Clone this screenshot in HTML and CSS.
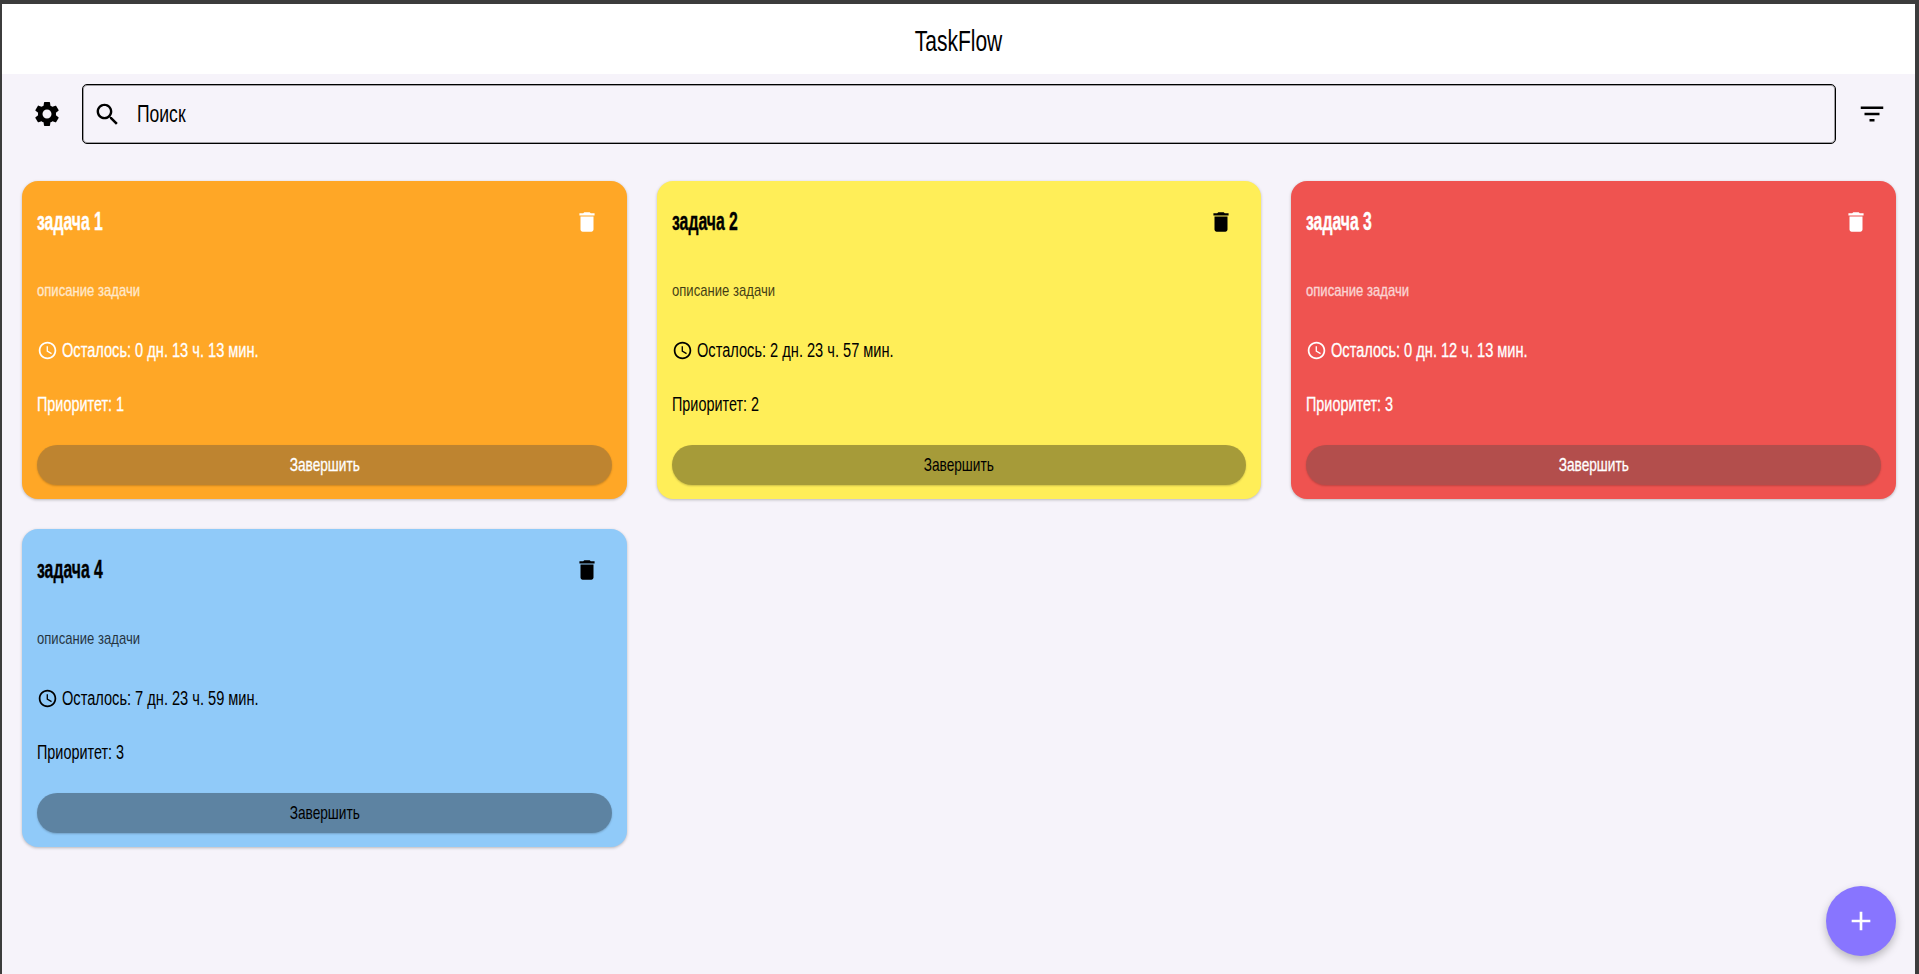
FILE: index.html
```html
<!DOCTYPE html>
<html lang="ru">
<head>
    <meta charset="UTF-8">
    <meta name="viewport" content="width=device-width, initial-scale=1.0">
    <title>TaskFlow</title>
    <link rel="stylesheet" href="styles.css">
</head>
<body>
    <div class="window">
        <header class="app-bar"><span>TaskFlow</span></header>

        <div class="toolbar">
            <button class="icon-btn settings">
                <svg width="30" height="30" viewBox="0 0 24 24"><path d="M19.14 12.94c.04-.3.06-.61.06-.94 0-.32-.02-.64-.07-.94l2.03-1.58c.18-.14.23-.41.12-.61l-1.92-3.32c-.12-.22-.37-.29-.59-.22l-2.39.96c-.5-.38-1.03-.7-1.62-.94l-.36-2.54c-.04-.24-.24-.41-.48-.41h-3.84c-.24 0-.43.17-.47.41l-.36 2.54c-.59.24-1.13.57-1.62.94l-2.39-.96c-.22-.08-.47 0-.59.22L2.74 8.87c-.12.21-.08.47.12.61l2.03 1.58c-.05.3-.09.63-.09.94s.02.64.07.94l-2.03 1.58c-.18.14-.23.41-.12.61l1.92 3.32c.12.22.37.29.59.22l2.39-.96c.5.38 1.03.7 1.62.94l.36 2.54c.05.24.24.41.48.41h3.84c.24 0 .44-.17.47-.41l.36-2.54c.59-.24 1.13-.56 1.62-.94l2.39.96c.22.08.47 0 .59-.22l1.92-3.32c.12-.22.07-.47-.12-.61l-2.01-1.58zM12 15.6c-1.98 0-3.6-1.62-3.6-3.6s1.62-3.6 3.6-3.6 3.6 1.62 3.6 3.6-1.62 3.6-3.6 3.6z"/></svg>
            </button>
            <div class="search">
                <svg width="29" height="29" viewBox="0 0 24 24"><path d="M15.5 14h-.79l-.28-.27C15.41 12.59 16 11.11 16 9.5 16 5.91 13.09 3 9.5 3S3 5.91 3 9.5 5.91 16 9.5 16c1.61 0 3.09-.59 4.23-1.57l.27.28v.79l5 4.99L20.49 19l-4.99-5zm-6 0C7.01 14 5 11.99 5 9.5S7.01 5 9.5 5 14 7.01 14 9.5 11.99 14 9.5 14z"/></svg>
                <span class="search-text">Поиск</span>
            </div>
            <button class="icon-btn filter">
                <svg width="30" height="30" viewBox="0 0 24 24"><path d="M3 6h18v2H3zM6 11h12v2H6zM10 16h4v2h-4z"/></svg>
            </button>
        </div>

        <div class="cards">
            <div class="card orange light">
                <div class="card-head">
                    <h2>задача 1</h2>
                    <svg class="trash" width="26" height="26" viewBox="0 0 24 24"><path d="M6 19c0 1.1.9 2 2 2h8c1.1 0 2-.9 2-2V7H6v12zM19 4h-3.5l-1-1h-5l-1 1H5v2h14V4z"/></svg>
                </div>
                <p class="desc"><span>описание задачи</span></p>
                <p class="left"><svg width="21" height="21" viewBox="0 0 24 24"><path d="M11.99 2C6.47 2 2 6.48 2 12s4.47 10 9.99 10C17.52 22 22 17.52 22 12S17.52 2 11.99 2zM12 20c-4.42 0-8-3.58-8-8s3.58-8 8-8 8 3.58 8 8-3.58 8-8 8zm.5-13H11v6l5.25 3.15.75-1.23-4.5-2.67V7z"/></svg><span>Осталось: 0 дн. 13 ч. 13 мин.</span></p>
                <p class="prio"><span>Приоритет: 1</span></p>
                <button class="done"><span>Завершить</span></button>
            </div>
            <div class="card yellow">
                <div class="card-head">
                    <h2>задача 2</h2>
                    <svg class="trash" width="26" height="26" viewBox="0 0 24 24"><path d="M6 19c0 1.1.9 2 2 2h8c1.1 0 2-.9 2-2V7H6v12zM19 4h-3.5l-1-1h-5l-1 1H5v2h14V4z"/></svg>
                </div>
                <p class="desc"><span>описание задачи</span></p>
                <p class="left"><svg width="21" height="21" viewBox="0 0 24 24"><path d="M11.99 2C6.47 2 2 6.48 2 12s4.47 10 9.99 10C17.52 22 22 17.52 22 12S17.52 2 11.99 2zM12 20c-4.42 0-8-3.58-8-8s3.58-8 8-8 8 3.58 8 8-3.58 8-8 8zm.5-13H11v6l5.25 3.15.75-1.23-4.5-2.67V7z"/></svg><span>Осталось: 2 дн. 23 ч. 57 мин.</span></p>
                <p class="prio"><span>Приоритет: 2</span></p>
                <button class="done"><span>Завершить</span></button>
            </div>
            <div class="card red light">
                <div class="card-head">
                    <h2>задача 3</h2>
                    <svg class="trash" width="26" height="26" viewBox="0 0 24 24"><path d="M6 19c0 1.1.9 2 2 2h8c1.1 0 2-.9 2-2V7H6v12zM19 4h-3.5l-1-1h-5l-1 1H5v2h14V4z"/></svg>
                </div>
                <p class="desc"><span>описание задачи</span></p>
                <p class="left"><svg width="21" height="21" viewBox="0 0 24 24"><path d="M11.99 2C6.47 2 2 6.48 2 12s4.47 10 9.99 10C17.52 22 22 17.52 22 12S17.52 2 11.99 2zM12 20c-4.42 0-8-3.58-8-8s3.58-8 8-8 8 3.58 8 8-3.58 8-8 8zm.5-13H11v6l5.25 3.15.75-1.23-4.5-2.67V7z"/></svg><span>Осталось: 0 дн. 12 ч. 13 мин.</span></p>
                <p class="prio"><span>Приоритет: 3</span></p>
                <button class="done"><span>Завершить</span></button>
            </div>
            <div class="card blue">
                <div class="card-head">
                    <h2>задача 4</h2>
                    <svg class="trash" width="26" height="26" viewBox="0 0 24 24"><path d="M6 19c0 1.1.9 2 2 2h8c1.1 0 2-.9 2-2V7H6v12zM19 4h-3.5l-1-1h-5l-1 1H5v2h14V4z"/></svg>
                </div>
                <p class="desc"><span>описание задачи</span></p>
                <p class="left"><svg width="21" height="21" viewBox="0 0 24 24"><path d="M11.99 2C6.47 2 2 6.48 2 12s4.47 10 9.99 10C17.52 22 22 17.52 22 12S17.52 2 11.99 2zM12 20c-4.42 0-8-3.58-8-8s3.58-8 8-8 8 3.58 8 8-3.58 8-8 8zm.5-13H11v6l5.25 3.15.75-1.23-4.5-2.67V7z"/></svg><span>Осталось: 7 дн. 23 ч. 59 мин.</span></p>
                <p class="prio"><span>Приоритет: 3</span></p>
                <button class="done"><span>Завершить</span></button>
            </div>
        </div>

        <button class="fab">
            <svg width="32" height="32" viewBox="0 0 24 24"><path d="M19 13h-6v6h-2v-6H5v-2h6V5h2v6h6v2z"/></svg>
        </button>
    </div>
</body>
</html>
```

FILE: styles.css
```css
* {
    box-sizing: border-box;
}
body {
    margin: 0;
    background-color: #3c3c3c;
    font-family: "Liberation Sans", Arial, sans-serif;
}
/* the original font is a condensed one, so the text is squeezed with scaleX */
.app-bar span,
.search-text,
.card h2,
.card p span,
.done span {
    display: inline-block;
    transform-origin: left center;
}
.window {
    position: relative;
    height: 970px;
    margin: 4px 4px 0 2px;
    background-color: #f6f3fa;
    overflow: hidden;
}
.app-bar {
    height: 70px;
    padding-top: 4px;
    background-color: #fff;
    display: flex;
    align-items: center;
    justify-content: center;
    font-size: 30px;
    color: #000;
}
.app-bar span {
    transform: scaleX(0.7);
    transform-origin: center;
}
.toolbar {
    display: flex;
    align-items: center;
    height: 60px;
    margin-top: 10px;
    padding: 0 7px 0 20px;
}
.icon-btn {
    height: 48px;
    border: none;
    background: none;
    padding: 0;
    display: flex;
    align-items: center;
    justify-content: center;
}
.settings {
    width: 60px;
    padding-right: 10px;
}
.filter {
    width: 72px;
}
.search {
    flex: 1;
    height: 60px;
    border: 1px solid #000;
    border-radius: 5px;
    box-shadow: inset 0 0 0 1px rgba(0, 0, 0, 0.35);
    display: flex;
    align-items: center;
    padding-left: 10px;
    gap: 15px;
}
.search-text {
    font-size: 24px;
    color: #000;
    transform: scaleX(0.73);
}
.cards {
    display: grid;
    grid-template-columns: repeat(3, 1fr);
    gap: 30px;
    padding: 37px 19px 0 20px;
}
.card {
    height: 318px;
    border-radius: 16px;
    padding: 15px 15px 14px;
    display: flex;
    flex-direction: column;
    color: #000;
    box-shadow: 0 1px 3px rgba(0, 0, 0, 0.25);
}
.orange {
    background-color: #ffa726;
}
.yellow {
    background-color: #ffee58;
}
.red {
    background-color: #ef5350;
}
.blue {
    background-color: #90caf9;
}
.light {
    color: #fff;
    -webkit-text-stroke: 0.3px #fff;
}
.card-head {
    display: flex;
    align-items: center;
    justify-content: space-between;
    height: 52px;
    padding-right: 12px;
}
.card-head h2 {
    margin: -2px 0 0;
    font-size: 25px;
    font-weight: bold;
    transform: scaleX(0.63);
    -webkit-text-stroke: 0.4px currentColor;
}
.trash {
    fill: currentColor;
}
.card p {
    margin: 0;
}
.desc {
    margin-top: 31px !important;
    height: 24px;
    line-height: 24px;
    font-size: 17px;
    opacity: 0.75;
}
.desc span {
    transform: scaleX(0.77);
}
.left {
    margin-top: 35px !important;
    height: 24px;
    display: flex;
    align-items: center;
    gap: 4px;
    font-size: 20px;
}
.left span {
    transform: scaleX(0.73);
}
.left svg {
    fill: currentColor;
    stroke: none;
}
.prio {
    margin-top: 30px !important;
    height: 24px;
    line-height: 24px;
    font-size: 20px;
}
.prio span {
    transform: scaleX(0.72);
}
.done {
    margin-top: auto;
    height: 40px;
    border: none;
    border-radius: 20px;
    background-color: rgba(0, 0, 0, 0.35);
    box-shadow: 0 1px 2px rgba(0, 0, 0, 0.2);
    font-family: inherit;
    font-size: 19px;
    color: inherit;
}
.light .done {
    background-color: rgba(70, 70, 70, 0.35);
}
.done span {
    transform: scaleX(0.72);
    transform-origin: center;
}
.fab {
    position: absolute;
    right: 19px;
    bottom: 18px;
    width: 70px;
    height: 70px;
    border: none;
    border-radius: 50%;
    background-color: #8875ff;
    box-shadow: 0 4px 8px rgba(0, 0, 0, 0.25);
    display: flex;
    align-items: center;
    justify-content: center;
}
.fab svg {
    fill: #fff;
}
```
